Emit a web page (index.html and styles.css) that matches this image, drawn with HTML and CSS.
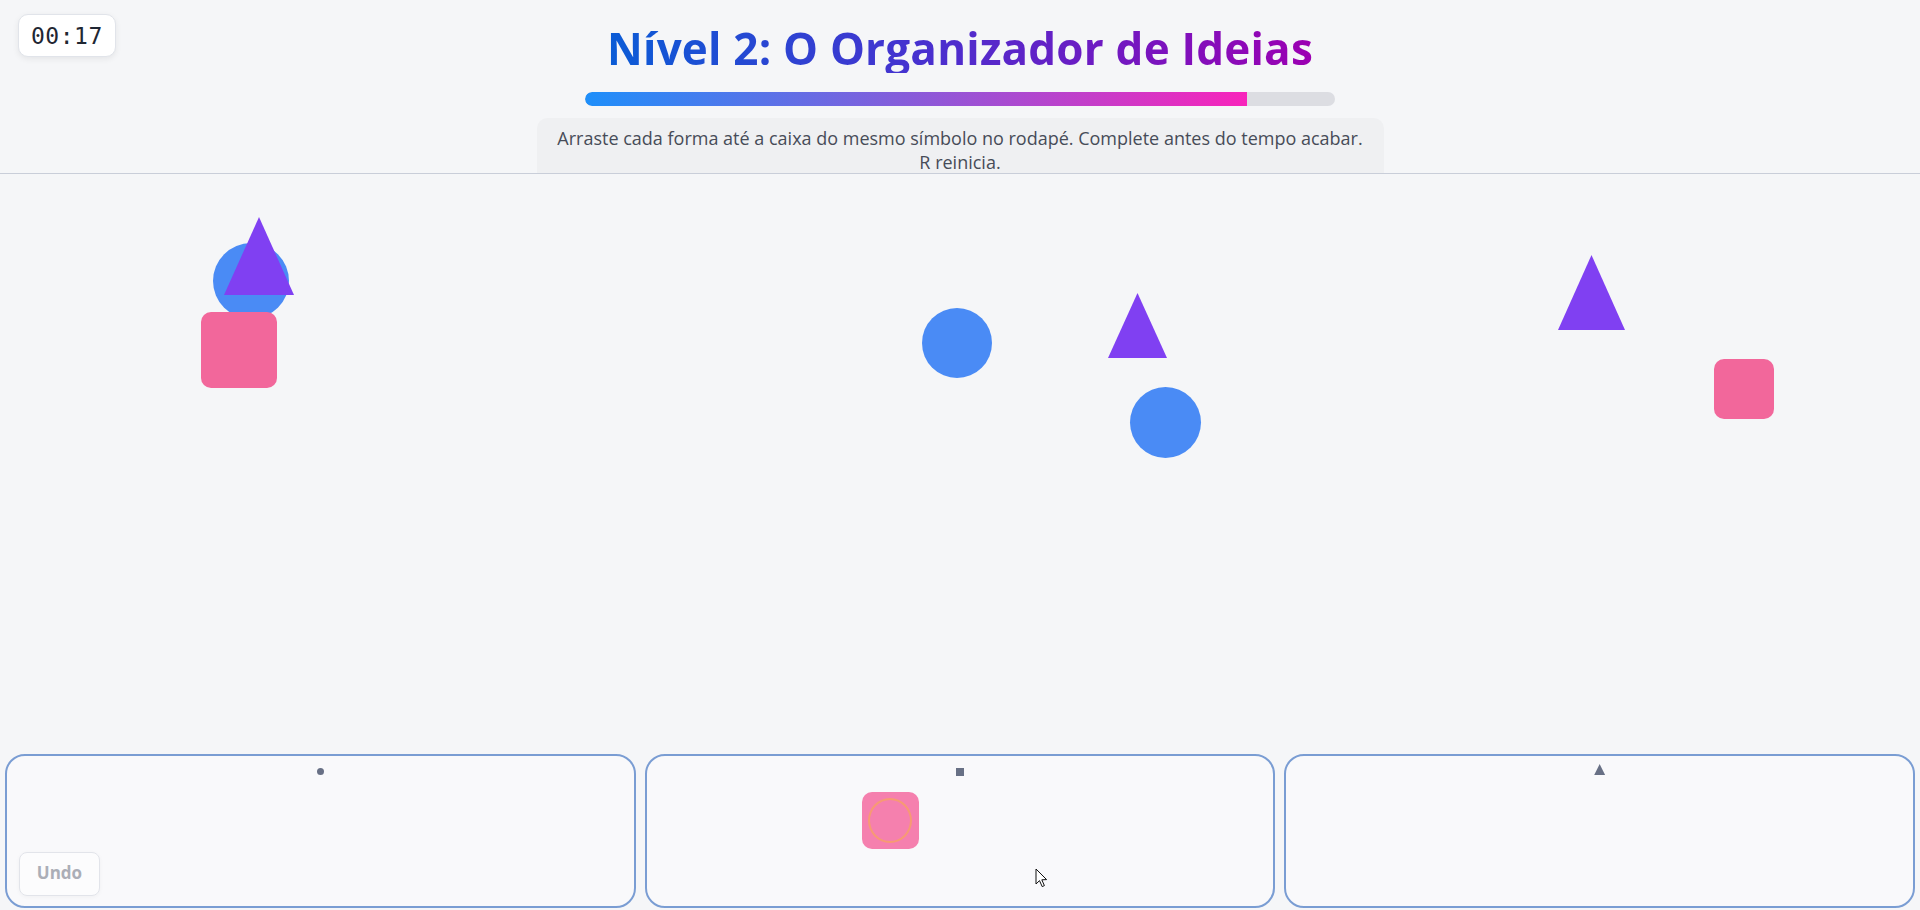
FILE: index.html
```html
<!DOCTYPE html>
<html lang="pt">
<head>
<meta charset="utf-8">
<title>Nível 2: O Organizador de Ideias</title>
<link rel="stylesheet" href="styles.css">
</head>
<body>
<div class="timer">00:17</div>
<header class="top">
  <h1 class="title">Nível 2: O Organizador de Ideias</h1>
  <div class="progress"><div class="fill" style="width:88.3%"></div></div>
  <p class="hint">Arraste cada forma até a caixa do mesmo símbolo no rodapé. Complete antes do tempo acabar.<br>R reinicia.</p>
</header>
<main class="board">
  <div class="shape circle" style="left:213px;top:69px;width:76px;height:76px"></div>
  <div class="shape tri" style="left:224px;top:43px;width:70px;height:78px"></div>
  <div class="shape square" style="left:201px;top:138px;width:76px;height:76px"></div>
  <div class="shape circle" style="left:922px;top:134px;width:70px;height:70px"></div>
  <div class="shape tri" style="left:1108px;top:119px;width:59px;height:65px"></div>
  <div class="shape circle" style="left:1130px;top:213px;width:71px;height:71px"></div>
  <div class="shape tri" style="left:1558px;top:81px;width:67px;height:75px"></div>
  <div class="shape square" style="left:1714px;top:185px;width:60px;height:60px"></div>
</main>
<footer class="bins">
  <div class="bin"><span class="sym sym-circle"></span></div>
  <div class="bin">
    <span class="sym sym-square"></span>
    <div class="shape square placed" style="left:215px;top:36px;width:57px;height:57px"><span class="ring"></span></div>
  </div>
  <div class="bin"><span class="sym sym-tri"></span></div>
</footer>
<button class="undo" disabled>Undo</button>
<svg class="cursor" width="13" height="20" viewBox="0 0 13 20"><path d="M1 1 L1 16 L4.5 12.6 L7.2 18.6 L9.4 17.6 L6.8 11.8 L11.6 11.6 Z" fill="#fff" stroke="#111" stroke-width="1" stroke-linejoin="round"/></svg>
</body>
</html>
```
FILE: styles.css
```css
* { box-sizing: border-box; }
html, body { margin: 0; padding: 0; }
body {
  height: 910px;
  overflow: hidden;
  display: flex;
  flex-direction: column;
  background: #f5f6f8;
  font-family: "Open Sans", "Noto Sans", sans-serif;
  position: relative;
}
.timer {
  position: absolute;
  left: 18px;
  top: 14px;
  width: 98px;
  height: 43px;
  padding: 7px 0 0 12px;
  background: #ffffff;
  border: 1px solid #e1e4ea;
  border-radius: 10px;
  box-shadow: 0 2px 6px rgba(0,0,0,0.07);
  font-family: "DejaVu Sans Mono", "Liberation Mono", monospace;
  font-size: 23px;
  letter-spacing: 0.5px;
  line-height: 28px;
  color: #1f2733;
  z-index: 5;
}
.top {
  height: 174px;
  flex: none;
  border-bottom: 1px solid #c9ced9;
  display: flex;
  flex-direction: column;
  align-items: center;
  overflow: hidden;
}
.title {
  margin: 23px 0 0;
  font-size: 44px;
  letter-spacing: 0.2px;
  line-height: 50px;
  font-weight: 700;
  background: linear-gradient(90deg, #0a5cd6 0%, #4830cf 45%, #9c00b2 100%);
  -webkit-background-clip: text;
  background-clip: text;
  color: transparent;
}
.progress {
  margin-top: 19px;
  width: 750px;
  height: 14px;
  border-radius: 7px;
  background: #dcdde2;
  overflow: hidden;
  flex: none;
}
.fill {
  height: 100%;
  border-radius: 7px 0 0 7px;
  background: linear-gradient(90deg, #1e8ffa 0%, #8a5ad9 50%, #f824bb 100%);
}
.hint {
  margin: 12px 0 0;
  width: 847px;
  padding: 8px 0 8px;
  border-radius: 10px;
  background: rgba(0,0,0,0.024);
  text-align: center;
  font-size: 18px;
  line-height: 24px;
  color: #474c58;
  flex: none;
}
.board {
  flex: 1;
  position: relative;
}
.shape { position: absolute; }
.circle { border-radius: 50%; background: #4a8bf5; }
.tri { background: #8040f2; clip-path: polygon(50% 0, 100% 100%, 0 100%); }
.square { border-radius: 10px; background: #f2679b; }
.bins {
  flex: none;
  height: 156px;
  padding: 0 5px 2px;
  display: grid;
  grid-template-columns: repeat(3, 1fr);
  gap: 9px;
}
.bin {
  position: relative;
  border: 2px solid #7a9dd3;
  border-radius: 20px;
  background: rgba(255,255,255,0.4);
  display: flex;
  justify-content: center;
  align-items: flex-start;
}
.sym { display: block; background: #687085; }
.sym-circle { width: 7px; height: 7px; border-radius: 50%; margin-top: 12px; }
.sym-square { width: 8px; height: 8px; margin-top: 12px; }
.sym-tri { width: 11px; height: 11px; margin-top: 8px; clip-path: polygon(50% 0, 100% 100%, 0 100%); }
.placed {
  background: #f580ae;
  display: flex;
  align-items: center;
  justify-content: center;
}
.ring {
  width: 44px;
  height: 45px;
  border-radius: 50%;
  border: 2px solid rgba(247,160,100,0.8);
}
.undo {
  position: absolute;
  left: 19px;
  bottom: 14px;
  width: 81px;
  height: 44px;
  border: 1px solid #e2e4ea;
  border-radius: 8px;
  background: rgba(255,255,255,0.55);
  box-shadow: 0 1px 4px rgba(0,0,0,0.04);
  font-family: "Open Sans", "Noto Sans", sans-serif;
  font-weight: 700;
  font-size: 17px;
  color: #abaeb7;
  padding: 0 0 3px;
}
.cursor {
  position: absolute;
  left: 1035px;
  top: 868px;
  z-index: 10;
}
```
